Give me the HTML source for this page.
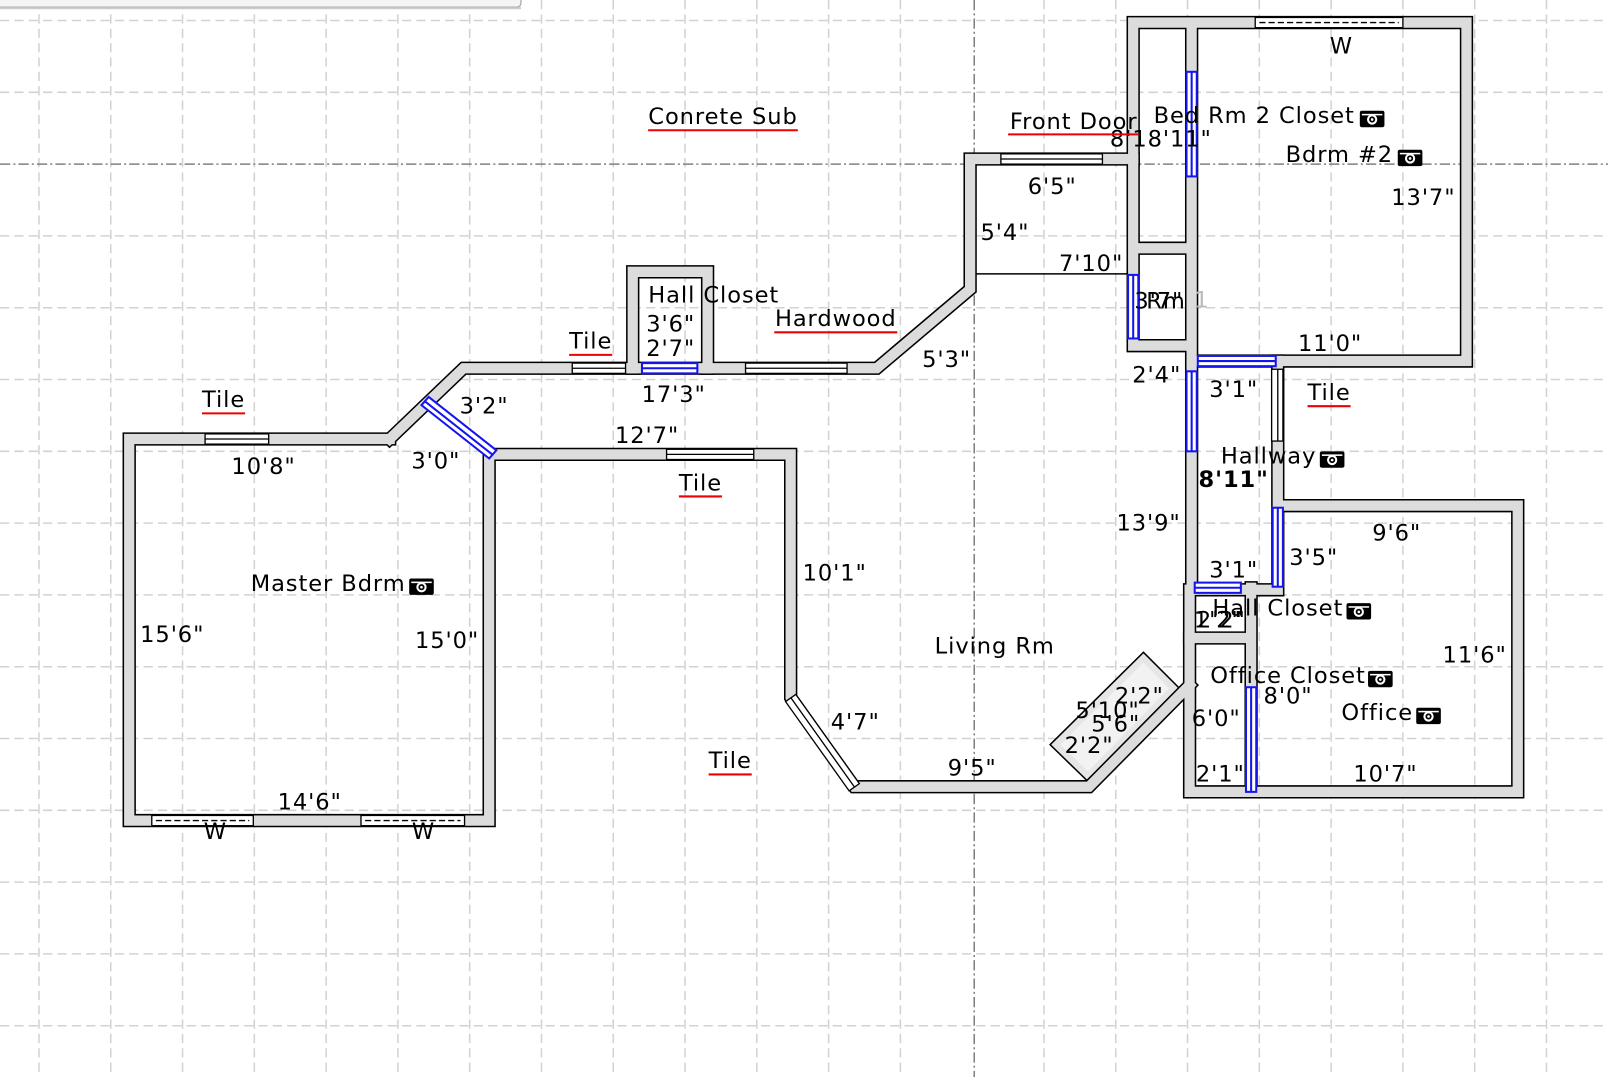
<!DOCTYPE html>
<html><head><meta charset="utf-8"><style>
html,body{margin:0;padding:0;background:#fff;}
svg{display:block;}
text{font-family:"DejaVu Sans","Liberation Sans",sans-serif;font-size:22px;letter-spacing:0.9px;fill:#000;}
</style></head><body>
<svg width="1608" height="1077" viewBox="0 0 1568 1050" preserveAspectRatio="none" xmlns="http://www.w3.org/2000/svg">
<defs>
<g id="cam"><rect x="-12" y="-8" width="24" height="16" rx="2" fill="#000"/><circle cx="0" cy="0.5" r="5" fill="#fff"/><circle cx="0" cy="0.5" r="3" fill="#000"/><circle cx="0" cy="0.5" r="1.3" fill="#fff"/><rect x="-10" y="-5" width="20" height="1.5" fill="#fff"/></g>
</defs>
<g stroke="#d2d2d2" stroke-width="1.5" stroke-dasharray="9,5" fill="none">
<path d="M38 0V1050M108 0V1050M178 0V1050M248 0V1050M318 0V1050M388 0V1050M458 0V1050M528 0V1050M598 0V1050M668 0V1050M738 0V1050M808 0V1050M878 0V1050M1018 0V1050M1088 0V1050M1158 0V1050M1228 0V1050M1298 0V1050M1368 0V1050M1438 0V1050M1508 0V1050"/>
<path d="M0 20H1568M0 90H1568M0 230H1568M0 300H1568M0 370H1568M0 440H1568M0 510H1568M0 580H1568M0 650H1568M0 720H1568M0 790H1568M0 860H1568M0 930H1568M0 1000H1568"/>
</g>
<g stroke="#808080" stroke-width="1.5" stroke-dasharray="10,3,2,3" fill="none">
<path d="M0 160H1568M950 0V1050"/>
</g>
<rect x="-5" y="-10" width="513" height="17" rx="4" fill="#f4f4f4" stroke="#999" stroke-width="1"/>
<rect x="0" y="7" width="508" height="2" fill="#ccc"/>

<polygon points="1115,636 1150,671 1061,762 1024,726" fill="#e6e6e6" stroke="#000" stroke-width="1.5"/>
<polygon points="1115,646 1140,671 1061,752 1034,726" fill="#f2f2f2"/>

<g fill="none" stroke="#000" stroke-width="13" stroke-linejoin="miter" stroke-linecap="square">
<path d="M380 428H126V800H477V443H771V680L833 767H1062L1160 668"/>
<path d="M380 428L452 359H855L946 282V155H1105"/>
<path d="M617 359V265H690V359"/>
<path d="M1105 337V22H1430V352H1162V22M1105 337H1162M1105 242H1162"/>
<path d="M1162 352V575"/>
<path d="M1246 352V575H1160M1160 575V772H1480V493H1246"/>
<path d="M1160 622H1220M1220 573V772"/>
</g>
<g fill="none" stroke="#dcdcdc" stroke-width="10" stroke-linejoin="miter" stroke-linecap="square">
<path d="M380 428H126V800H477V443H771V680L833 767H1062L1160 668"/>
<path d="M380 428L452 359H855L946 282V155H1105"/>
<path d="M617 359V265H690V359"/>
<path d="M1105 337V22H1430V352H1162V22M1105 337H1162M1105 242H1162"/>
<path d="M1162 352V575"/>
<path d="M1246 352V575H1160M1160 575V772H1480V493H1246"/>
<path d="M1160 622H1220M1220 573V772"/>
</g>
<line x1="952" y1="267" x2="1100" y2="267" stroke="#000" stroke-width="1.5"/>

<g stroke="#000" stroke-width="1.3" fill="#fff">
<rect x="200" y="423" width="62" height="10"/><line x1="200" y1="428" x2="262" y2="428"/>
<rect x="148" y="795" width="99" height="10"/>
<rect x="352" y="795" width="101" height="10"/>
<rect x="558" y="354" width="52" height="10"/><line x1="558" y1="359" x2="610" y2="359"/>
<rect x="727" y="354" width="99" height="10"/><line x1="727" y1="359" x2="826" y2="359"/>
<rect x="650" y="438" width="85" height="10"/><line x1="650" y1="443" x2="735" y2="443"/>
<rect x="976" y="150" width="99" height="10"/><line x1="976" y1="155" x2="1075" y2="155"/>
<rect x="1224" y="17" width="144" height="10"/>
<rect x="1240" y="360" width="11" height="70"/><line x1="1246" y1="360" x2="1246" y2="430"/>
</g>
<g stroke="#000" stroke-width="1.3" fill="none" stroke-dasharray="6,3">
<line x1="152" y1="800" x2="243" y2="800"/><line x1="356" y1="800" x2="449" y2="800"/><line x1="1228" y1="22" x2="1364" y2="22"/>
</g>
<polygon points="776,677 838,764 828,771 766,684" fill="#fff" stroke="#000" stroke-width="1.3"/>
<line x1="771" y1="680" x2="833" y2="767" stroke="#000" stroke-width="1.3"/>

<g stroke="#1515ee" stroke-width="2" fill="#fff">
<rect x="626" y="354" width="54" height="10"/><line x1="626" y1="359" x2="680" y2="359"/>
<rect x="1157" y="70" width="10" height="102"/><line x1="1162" y1="70" x2="1162" y2="172"/>
<rect x="1100" y="268" width="10" height="62"/><line x1="1105" y1="268" x2="1105" y2="330"/>
<rect x="1168" y="347" width="76" height="10"/><line x1="1168" y1="352" x2="1244" y2="352"/>
<rect x="1157" y="362" width="10" height="78"/><line x1="1162" y1="362" x2="1162" y2="440"/>
<rect x="1241" y="495" width="10" height="77"/><line x1="1246" y1="495" x2="1246" y2="572"/>
<rect x="1165" y="568" width="45" height="10"/><line x1="1165" y1="573" x2="1210" y2="573"/>
<rect x="1215" y="670" width="10" height="102"/><line x1="1220" y1="670" x2="1220" y2="772"/>
<polygon points="418,387 484,439 477,447 411,395"/><line x1="414" y1="391" x2="480" y2="443"/>
</g>

<g text-anchor="middle">
<text x="705" y="121">Conrete Sub</text>
<text x="1047" y="126">Front Door</text>
<text x="1132" y="143">8'18'11"</text>
<text x="1223" y="120">Bed Rm 2 Closet</text>
<text x="1306" y="158">Bdrm #2</text>
<text x="1308" y="52">W</text>
<text x="1388" y="200">13'7"</text>
<text x="1026" y="189">6'5"</text>
<text x="980" y="234">5'4"</text>
<text x="1064" y="264">7'10"</text>
<text x="1130" y="301">3'7"</text>
<text x="1137" y="301">Rm</text>
<text x="1172" y="300" style="fill:#bbb">1</text>
<text x="1297" y="342">11'0"</text>
<text x="923" y="358">5'3"</text>
<text x="1128" y="373">2'4"</text>
<text x="1203" y="387">3'1"</text>
<text x="1296" y="390">Tile</text>
<text x="1237" y="452">Hallway</text>
<text x="1203" y="475" style="font-weight:bold">8'11"</text>
<text x="1120" y="517">13'9"</text>
<text x="1362" y="527">9'6"</text>
<text x="1281" y="551">3'5"</text>
<text x="1203" y="563">3'1"</text>
<text x="1246" y="600">Hall Closet</text>
<text x="1188" y="612">1'2"</text>
<text x="1191" y="612">2'2"</text>
<text x="1438" y="646">11'6"</text>
<text x="1256" y="666">Office Closet</text>
<text x="1256" y="686">8'0"</text>
<text x="1343" y="702">Office</text>
<text x="1186" y="708">6'0"</text>
<text x="1190" y="762">2'1"</text>
<text x="1351" y="762">10'7"</text>
<text x="1111" y="686">2'2"</text>
<text x="1080" y="700">5'10"</text>
<text x="1088" y="713">5'6"</text>
<text x="1062" y="734">2'2"</text>
<text x="970" y="637">Living Rm</text>
<text x="712" y="749">Tile</text>
<text x="948" y="756">9'5"</text>
<text x="834" y="711">4'7"</text>
<text x="814" y="566">10'1"</text>
<text x="683" y="478">Tile</text>
<text x="631" y="432">12'7"</text>
<text x="657" y="392">17'3"</text>
<text x="576" y="340">Tile</text>
<text x="696" y="295">Hall Closet</text>
<text x="654" y="323">3'6"</text>
<text x="654" y="347">2'7"</text>
<text x="815" y="318">Hardwood</text>
<text x="472" y="403">3'2"</text>
<text x="425" y="457">3'0"</text>
<text x="257" y="462">10'8"</text>
<text x="218" y="397">Tile</text>
<text x="320" y="576">Master Bdrm</text>
<text x="168" y="626">15'6"</text>
<text x="436" y="632">15'0"</text>
<text x="302" y="789">14'6"</text>
<text x="210" y="818">W</text>
<text x="413" y="818">W</text>
</g>
<g stroke="#e00" stroke-width="2">
<line x1="632" y1="127" x2="778" y2="127"/>
<line x1="983" y1="131" x2="1110" y2="131"/>
<line x1="1275" y1="396" x2="1317" y2="396"/>
<line x1="691" y1="755" x2="733" y2="755"/>
<line x1="662" y1="484" x2="704" y2="484"/>
<line x1="555" y1="346" x2="597" y2="346"/>
<line x1="755" y1="324" x2="875" y2="324"/>
<line x1="197" y1="403" x2="239" y2="403"/>
</g>
<use href="#cam" x="1338" y="116"/>
<use href="#cam" x="1375" y="154"/>
<use href="#cam" x="1299" y="448"/>
<use href="#cam" x="1325" y="596"/>
<use href="#cam" x="1346" y="662"/>
<use href="#cam" x="1393" y="698"/>
<use href="#cam" x="411" y="572"/>
</svg>
</body></html>
